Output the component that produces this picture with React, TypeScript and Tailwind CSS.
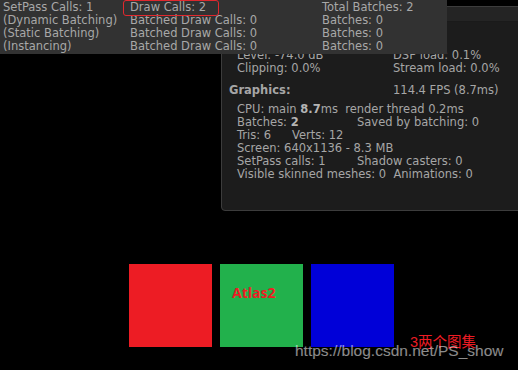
export default function App() {
  const font = { fontFamily: '"DejaVu Sans", Verdana, sans-serif' };
  return (
    <div className="relative w-[518px] h-[370px] bg-black overflow-hidden" style={font}>
      {/* stats window */}
      <div className="ml-[221px] mt-[6px] w-[300px] h-[205px] bg-[#1c1c1c] border border-[#3c3c3c] rounded-bl-[4px] text-[11.5px] leading-[13px] text-[#a6a6a6]">
        <div className="h-[15px] bg-[#242424] border-b border-[#1a1a1a]" />
        <div className="pl-[15px] pt-[27px]">
          <div className="flex">
            <span className="w-[156px]">Level: -74.0 dB</span>
            <span>DSP load: 0.1%</span>
          </div>
          <div className="flex">
            <span className="w-[156px]">Clipping: 0.0%</span>
            <span>Stream load: 0.0%</span>
          </div>
          <div className="flex mt-[9px] -ml-[8px]">
            <span className="w-[164px] font-bold">Graphics:</span>
            <span>114.4 FPS (8.7ms)</span>
          </div>
          <div className="mt-[6px]">
            CPU: main <b className="text-[#b4b4b4]">8.7</b>ms&nbsp; render thread 0.2ms
          </div>
          <div className="flex">
            <span className="w-[120px]">
              Batches: <b className="text-[#b4b4b4]">2</b>
            </span>
            <span>Saved by batching: 0</span>
          </div>
          <div className="flex">
            <span className="w-[55px]">Tris: 6</span>
            <span>Verts: 12</span>
          </div>
          <div>Screen: 640x1136 - 8.3 MB</div>
          <div className="flex">
            <span className="w-[120px]">SetPass calls: 1</span>
            <span>Shadow casters: 0</span>
          </div>
          <div>Visible skinned meshes: 0&nbsp; Animations: 0</div>
        </div>
      </div>

      {/* stats overlay bar */}
      <div className="absolute left-0 top-0 w-[447px] h-[54px] bg-[#323232] text-[11.5px] leading-[13px] text-[#a8a8a8] pl-[3px] pt-[1px]">
        <div className="flex">
          <span className="w-[127px]">SetPass Calls: 1</span>
          <span className="w-[192px] relative">
            Draw Calls: 2
            <span className="absolute left-[-7px] top-[-1px] w-[96px] h-[16px] border border-[#e0282e] rounded-[3px]" />
          </span>
          <span>Total Batches: 2</span>
        </div>
        <div className="flex">
          <span className="w-[127px]">(Dynamic Batching)</span>
          <span className="w-[192px]">Batched Draw Calls: 0</span>
          <span>Batches: 0</span>
        </div>
        <div className="flex">
          <span className="w-[127px]">(Static Batching)</span>
          <span className="w-[192px]">Batched Draw Calls: 0</span>
          <span>Batches: 0</span>
        </div>
        <div className="flex">
          <span className="w-[127px]">(Instancing)</span>
          <span className="w-[192px]">Batched Draw Calls: 0</span>
          <span>Batches: 0</span>
        </div>
      </div>

      {/* sprites */}
      <div className="flex gap-[8px] ml-[129px] mt-[53px]">
        <div className="w-[83px] h-[83px] bg-[#ed1c24]" />
        <div className="w-[83px] h-[83px] bg-[#22b14c] pl-[12px] pt-[17px]">
          <span className="text-[#ed1c24] font-bold text-[14px]" style={{ fontFamily: '"Open Sans", sans-serif' }}>
            Atlas2
          </span>
        </div>
        <div className="w-[83px] h-[83px] bg-[#0000d8]" />
      </div>

      <div
        className="absolute left-[410px] top-[332px] text-[14.5px] leading-[20px] text-[#ed1c24]"
        style={{ fontFamily: '"Liberation Sans", "Noto Sans CJK SC", sans-serif' }}
      >
        3两个图集
      </div>
      <div
        className="absolute left-[295px] top-[341px] text-[15.5px] leading-[20px] text-white/55"
        style={{ fontFamily: '"Liberation Sans", Arial, sans-serif' }}
      >
        https://blog.csdn.net/PS_show
      </div>
    </div>
  );
}
